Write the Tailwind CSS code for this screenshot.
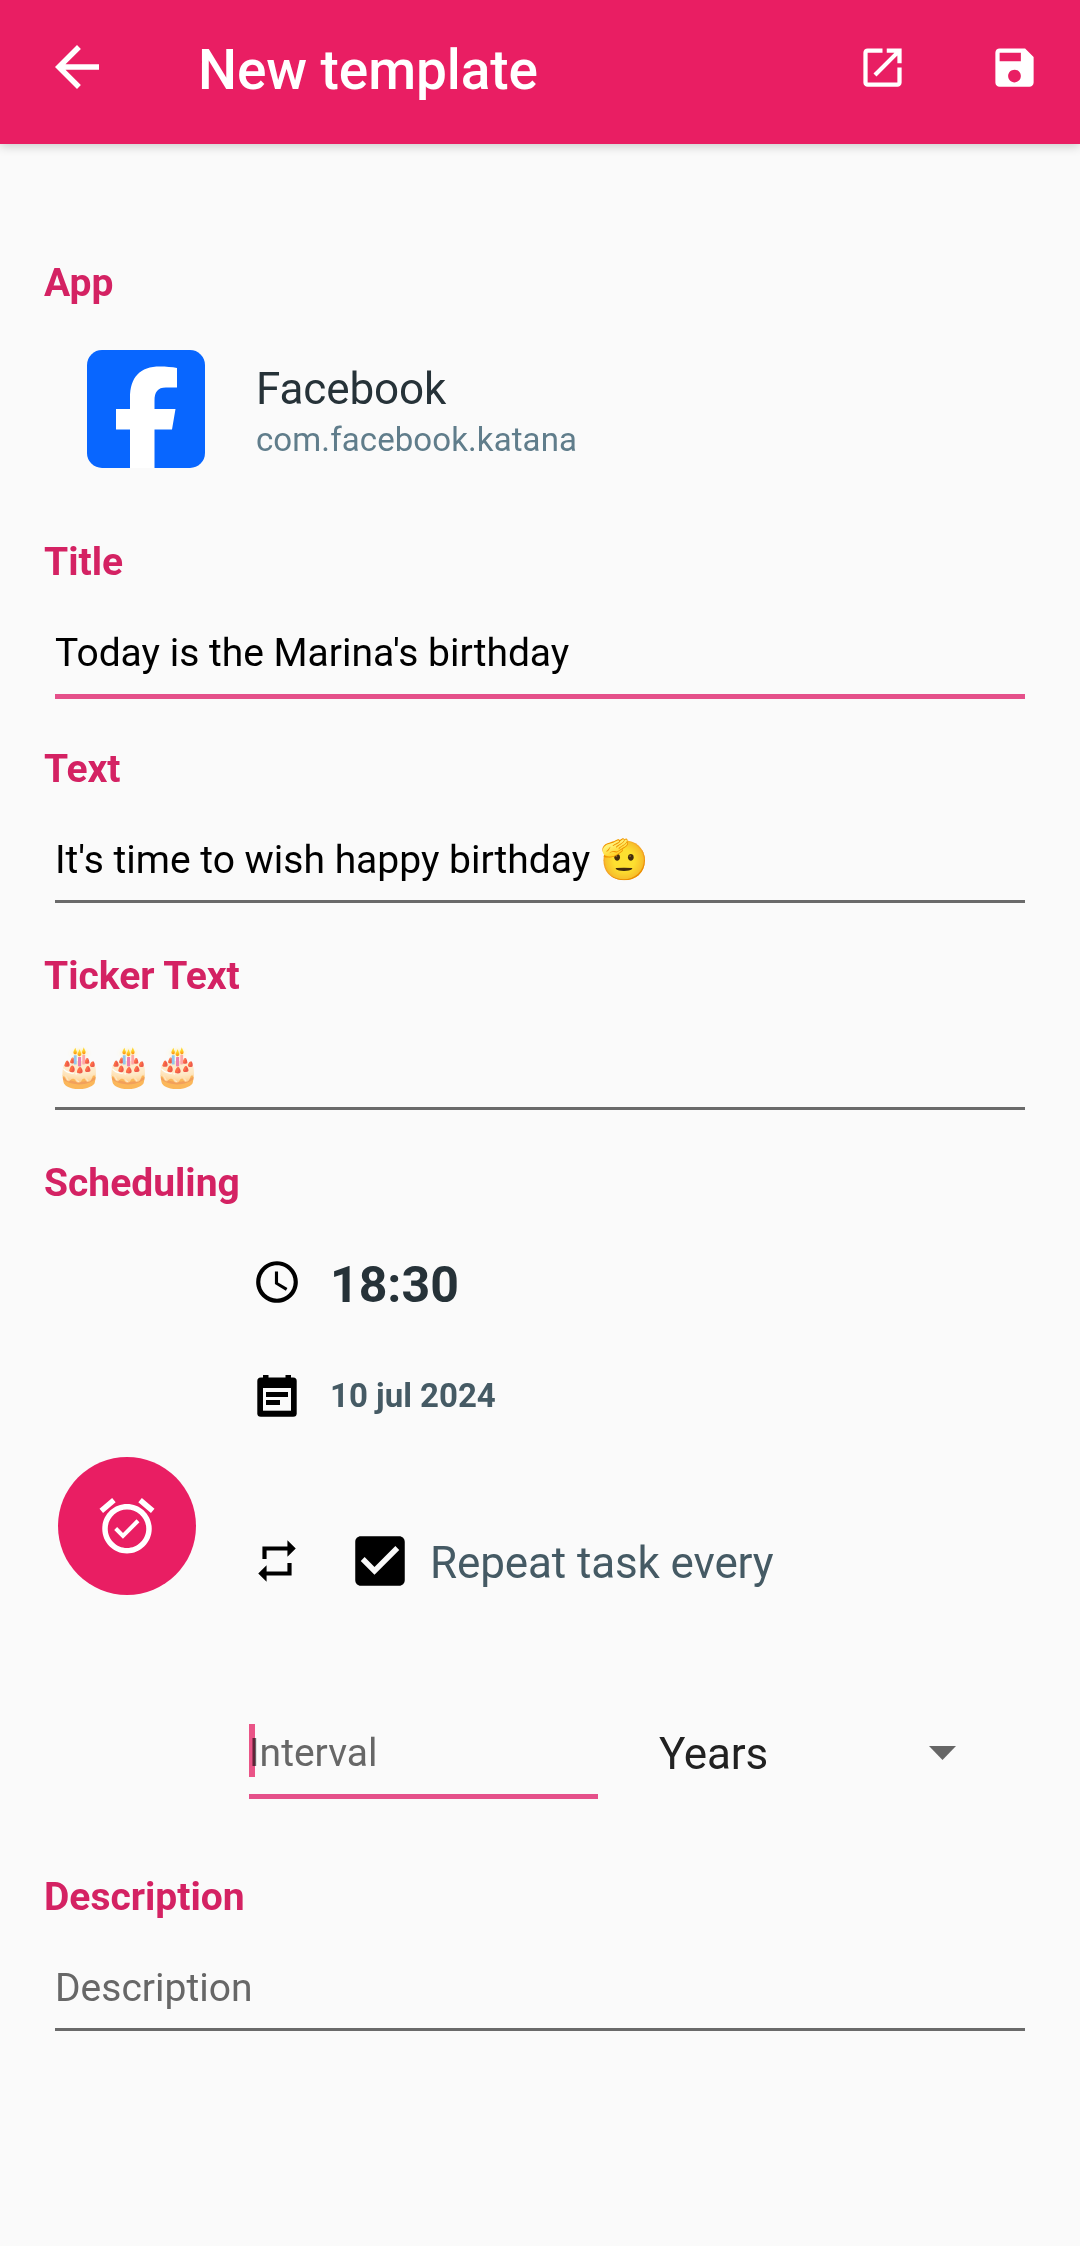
<!DOCTYPE html>
<html lang="en">
<head>
<meta charset="utf-8">
<title>New template</title>
<script src="https://cdn.jsdelivr.net/npm/@tailwindcss/browser@4"></script>
</head>
<body class="h-[2246px] w-[1080px] overflow-hidden bg-[#fafafa] font-['Roboto','Noto_Color_Emoji',sans-serif] text-[39px] leading-[46px] text-black">
<header class="flex h-36 items-start bg-[#e91e63] pl-[44px] pt-[34px] text-white shadow-[0_2px_10px_rgba(0,0,0,0.2)]">
  <svg class="size-[66px] shrink-0" viewBox="0 0 24 24" fill="currentColor"><path d="M20 11H7.83l5.59-5.59L12 4l-8 8 8 8 1.41-1.41L7.83 13H20v-2z"/></svg>
  <h1 class="ml-[88px] mt-[4px] w-[659px] text-[55px] font-medium leading-[64px] tracking-[-0.1px]">New template</h1>
  <svg class="mt-[7.5px] size-[51px] shrink-0" viewBox="0 0 24 24" fill="currentColor"><path d="M19 19H5V5h7V3H5a2 2 0 0 0-2 2v14a2 2 0 0 0 2 2h14c1.1 0 2-.9 2-2v-7h-2v7zM14 3v2h3.59l-9.83 9.83 1.41 1.41L19 6.41V10h2V3h-7z"/></svg>
  <svg class="ml-[81px] mt-[7.5px] size-[51px] shrink-0" viewBox="0 0 24 24" fill="currentColor"><path d="M17 3H5a2 2 0 0 0-2 2v14a2 2 0 0 0 2 2h14c1.1 0 2-.9 2-2V7l-4-4zm-5 16c-1.66 0-3-1.34-3-3s1.34-3 3-3 3 1.34 3 3-1.34 3-3 3zm3-10H5V5h10v4z"/></svg>
</header>

<main class="pl-[44px] pr-[55px] pt-[116px]">
  <section class="h-[279px]">
    <h2 class="font-bold text-[#d42263]">App</h2>
    <div class="flex pl-[43px] pt-11">
      <svg class="size-[118px]" viewBox="0 0 118 118"><rect width="118" height="118" rx="15" fill="#0866ff"/><path fill="#fff" d="M43 118V79.500H29V59h14V48C43 27 53 16.500 73 16.500c6 0 12 .5 17 1.500v19.500H79C70.500 37.500 67.500 42 67.500 51v8h21l-3.500 20.500H67.500V118z"/></svg>
      <div class="ml-[51px] mt-[13px]">
        <p class="text-[44px] leading-[52px] tracking-[-0.1px] text-[#263238]">Facebook</p>
        <p class="mt-[5px] text-[33px] leading-[40px] tracking-[0.1px] text-[#607d8b]">com.facebook.katana</p>
      </div>
    </div>
  </section>

  <section class="h-[207px]">
    <h2 class="font-bold text-[#d42263]">Title</h2>
    <div class="ml-[11px] mt-[45px] h-[69px] border-b-[5.5px] border-[#e5508a]">Today is the Marina's birthday</div>
  </section>
  <section class="h-[207px]">
    <h2 class="font-bold text-[#d42263]">Text</h2>
    <div class="ml-[11px] mt-[45px] h-[66px] border-b-[3px] border-[#6a6a6a]">It's time to wish happy birthday 🫡</div>
  </section>
  <section class="h-[207px]">
    <h2 class="font-bold text-[#d42263]">Ticker Text</h2>
    <div class="ml-[11px] mt-[45px] h-[66px] border-b-[3px] border-[#6a6a6a] tracking-[0.5px]">🎂🎂🎂</div>
  </section>

  <section class="h-[714px]">
    <h2 class="font-bold text-[#d42263]">Scheduling</h2>
    <div class="flex">
      <button class="ml-[14px] mt-[251px] flex size-[138px] shrink-0 items-center justify-center rounded-full bg-[#e91e63] text-white">
        <svg class="size-[66px]" viewBox="0 0 24 24" fill="currentColor"><path d="M22 5.720l-4.600-3.860-1.290 1.530 4.600 3.860L22 5.720zM7.880 3.390L6.600 1.860 2 5.710l1.290 1.530 4.590-3.850zM12 4c-4.970 0-9 4.030-9 9s4.020 9 9 9c4.970 0 9-4.030 9-9s-4.030-9-9-9zm0 16c-3.870 0-7-3.130-7-7s3.130-7 7-7 7 3.130 7 7-3.130 7-7 7zm-1.460-5.470L8.410 12.400l-1.060 1.060 3.180 3.180 6-6-1.060-1.060-4.930 4.950z"/></svg>
      </button>
      <div class="ml-[53px] mt-[50px] w-[776px]">
        <div class="flex h-[58px] pl-[3px]">
          <svg class="mt-px size-[50px]" viewBox="0 0 24 24"><path d="M11.990 2C6.470 2 2 6.480 2 12s4.470 10 9.990 10C17.520 22 22 17.520 22 12S17.520 2 11.990 2zM12 20c-4.420 0-8-3.580-8-8s3.580-8 8-8 8 3.580 8 8-3.580 8-8 8zm.5-13H11v6l5.250 3.150.75-1.230-4.500-2.670z"/></svg>
          <p class="ml-[28px] text-[50px] font-bold leading-[58px] text-[#263238]">18:30</p>
        </div>
        <div class="mt-[57px] flex h-[50px] pl-[3px]">
          <svg class="size-[50px]" viewBox="0 0 50 50"><rect x="5.300" y="6.500" width="39.400" height="39.300" rx="3.500"/><path d="M11 4h5.500v4H11zM33.500 4H39v4h-5.500z"/><path fill="#fafafa" d="M11 17h28v22.700H11z"/><path d="M14 21h22v5H14zM14 29h14v5H14z"/></svg>
          <p class="ml-[28px] mt-[5px] text-[33px] font-bold leading-[40px] text-[#455a64]">10 jul 2024</p>
        </div>
        <div class="mt-[107px] flex h-[66px] pl-[3px]">
          <svg class="mt-[8px] size-[50px]" viewBox="0 0 24 24"><path d="M7 7h10v3l4-4-4-4v3H5v6h2V7zm10 10H7v-3l-4 4 4 4v-3h12v-6h-2v4z"/></svg>
          <svg class="ml-[45px] size-[66px]" viewBox="0 0 24 24"><path d="M19 3H5c-1.110 0-2 .9-2 2v14c0 1.100.89 2 2 2h14c1.110 0 2-.9 2-2V5c0-1.100-.89-2-2-2zm-9 14l-5-5 1.410-1.410L10 14.170l7.590-7.590L19 8l-9 9z"/></svg>
          <p class="ml-[17px] mt-[9px] text-[44px] leading-[52px] tracking-[-0.12px] text-[#455a64]">Repeat task every</p>
        </div>
        <div class="mt-[130px] flex">
          <div class="relative h-[75px] w-[349px] border-b-[5px] border-[#e5508a] pt-[6px] text-[#676767]">Interval<span class="absolute left-0 top-0 h-[53px] w-[6px] bg-[#e91e63]/75 mix-blend-multiply"></span></div>
          <div class="ml-[61px] flex w-[297px] justify-between pt-[4px]">
            <p class="text-[44px] leading-[52px] tracking-[-0.2px] text-[#212121]">Years</p>
            <svg class="mt-[18px] h-[14px] w-[27px]" viewBox="0 0 27 14"><path fill="#666" d="M0 0h27L13.500 14z"/></svg>
          </div>
        </div>
      </div>
    </div>
  </section>

  <section>
    <h2 class="font-bold text-[#d42263]">Description</h2>
    <div class="ml-[11px] mt-[45px] h-[66px] border-b-[3px] border-[#6a6a6a] text-[#676767]">Description</div>
  </section>
</main>
</body>
</html>
